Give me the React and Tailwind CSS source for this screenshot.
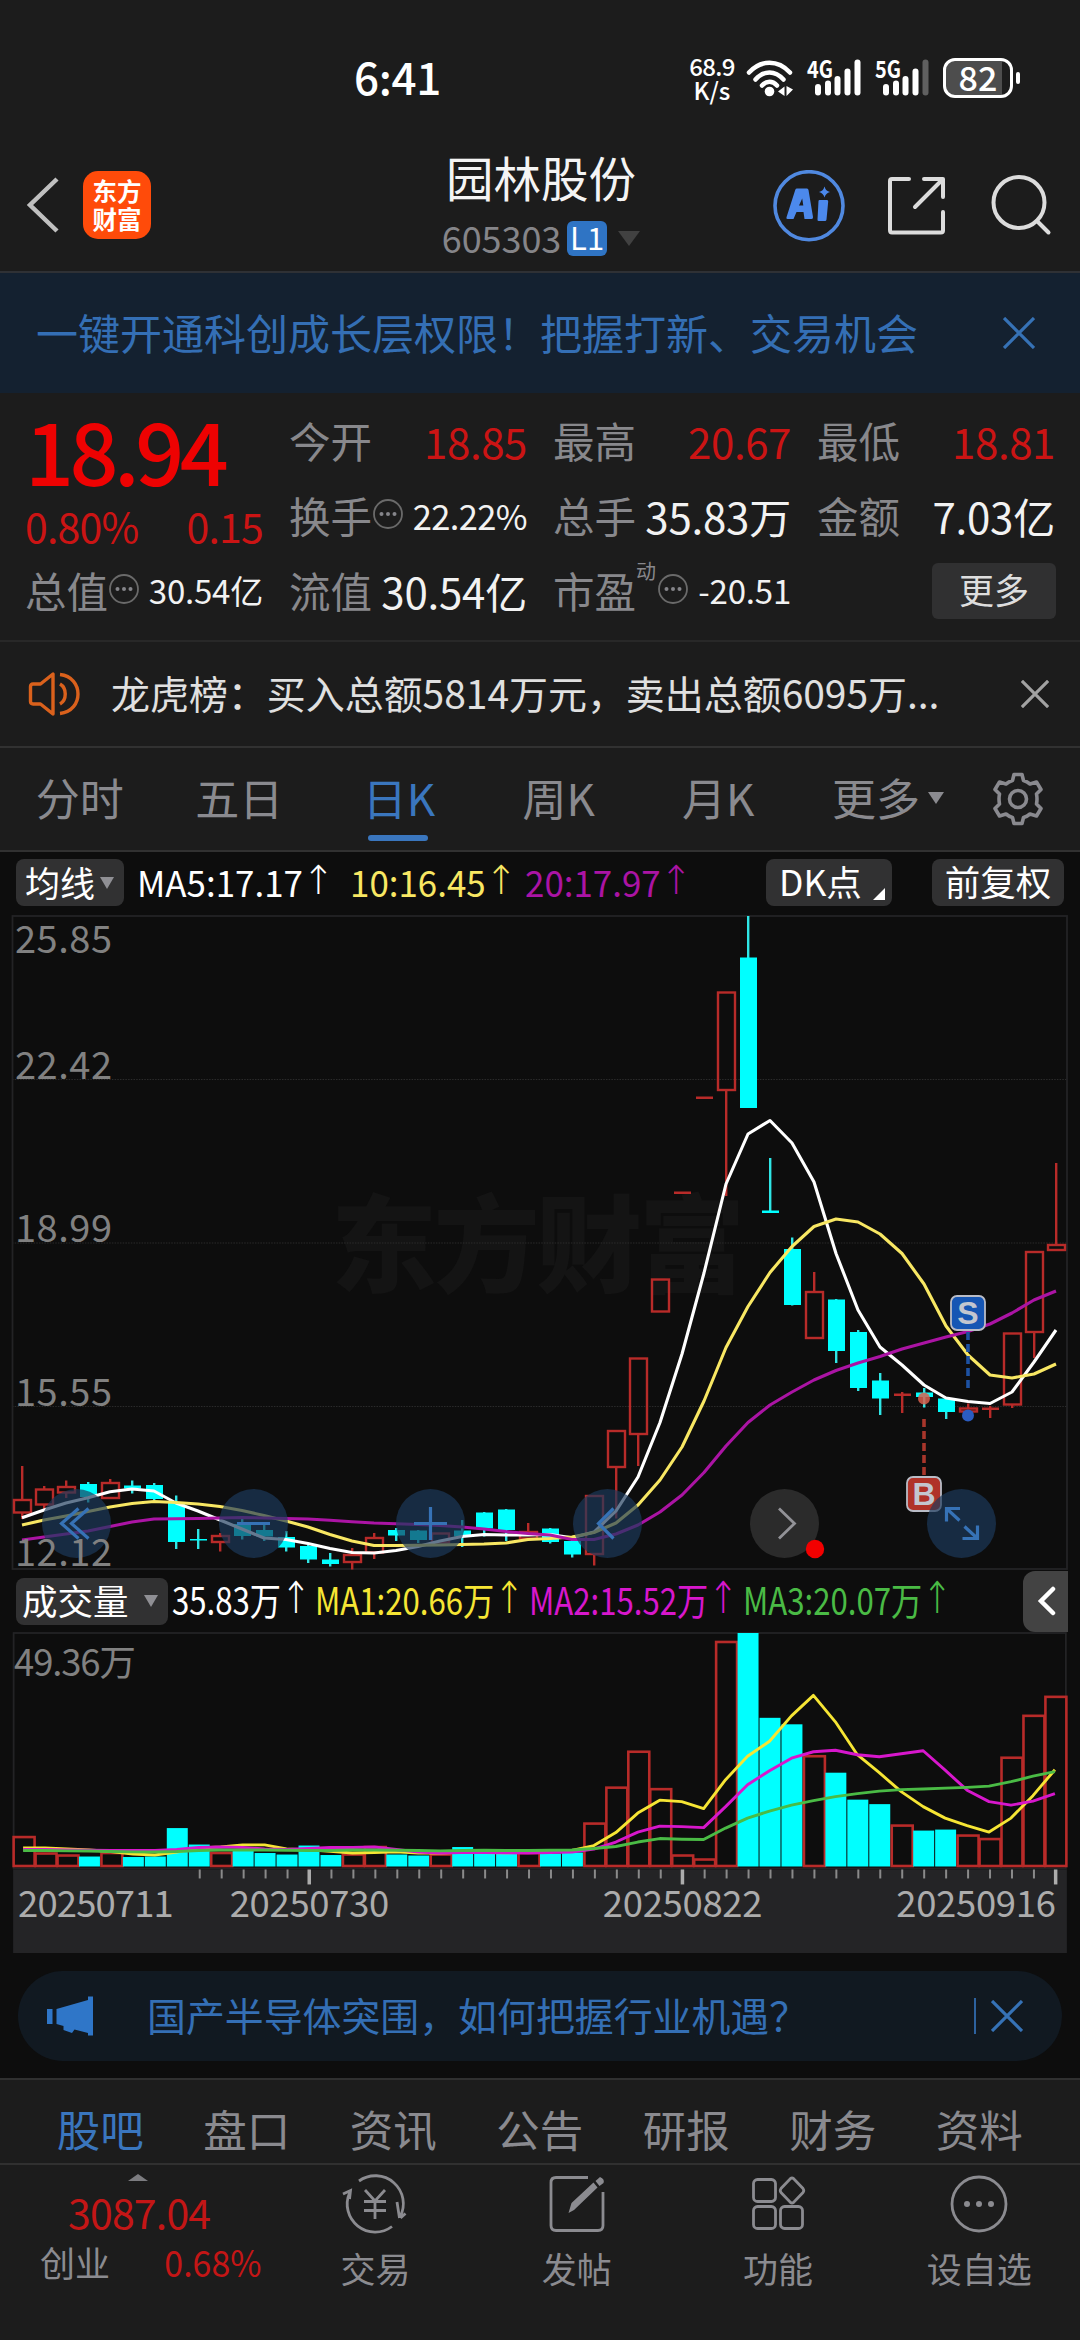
import React from "react";

// Daily candles: [kind, high, open/close top, open/close bottom, low] in screen units.
const CANDLES = [
  ["r", 1465, 1499, 1511.5, 1518], ["r", 1485, 1488.5, 1503.5, 1510], ["r", 1479.5, 1486, 1491.5, 1497],
  ["c", 1481, 1483, 1496, 1501.5], ["r", 1478, 1482, 1497, 1497], ["c", 1479.5, 1484.5, 1487.5, 1492.5],
  ["c", 1482, 1484, 1498, 1499], ["c", 1494.5, 1502, 1541, 1548], ["c", 1528, 1538, 1539.5, 1548],
  ["r", 1532, 1535, 1541, 1550.5], ["c", 1517, 1523, 1535, 1538.5], ["c", 1524, 1529, 1535.5, 1540],
  ["c", 1530, 1536, 1546.5, 1550.5], ["c", 1544, 1545, 1558.5, 1562], ["c", 1552, 1558.5, 1563, 1565.5],
  ["r", 1547, 1554, 1561, 1568.5], ["r", 1532, 1537, 1551.5, 1558], ["c", 1527, 1529, 1534.5, 1540],
  ["c", 1529, 1529.5, 1539, 1542], ["r", 1532, 1532.5, 1541.5, 1541.5], ["c", 1519, 1529.5, 1535.5, 1546],
  ["c", 1511, 1511.5, 1527.5, 1535.5], ["c", 1508, 1508.5, 1529, 1540], ["r", 1522, 1531, 1537.5, 1537.5],
  ["c", 1527, 1527.5, 1541, 1542.5], ["c", 1539, 1540, 1553.5, 1556.5], ["r", 1494, 1495, 1553, 1564.5],
  ["r", 1429, 1430, 1466, 1517.5], ["r", 1357, 1357.5, 1433, 1465], ["r", 1278, 1278.5, 1310.5, 1311],
  ["r", 1191.5, 1190.5, 1192.5, 1191.5], ["r", 1096.5, 1095.5, 1097.5, 1096.5], ["r", 991, 991.5, 1089, 1195],
  ["c", 915, 956.5, 1107, 1107], ["c", 1157, 1209.5, 1212, 1210.5], ["c", 1236.5, 1248, 1304, 1304.5],
  ["r", 1271, 1291, 1337, 1337], ["c", 1298, 1298.5, 1350, 1362], ["c", 1329, 1331, 1387, 1390],
  ["c", 1372, 1379.5, 1397.5, 1414], ["r", 1391, 1392.5, 1394.5, 1412], ["c", 1387, 1391.5, 1396, 1406.5],
  ["c", 1397, 1397.5, 1411, 1418], ["r", 1402.5, 1407.5, 1410.5, 1415], ["r", 1405, 1406.5, 1408.5, 1417],
  ["r", 1332, 1332.5, 1403.5, 1407], ["r", 1250, 1251, 1331, 1357], ["r", 1162, 1244, 1249, 1250],
];

const MA5 = [1516.7, 1509, 1502, 1496.7, 1490.7, 1488, 1490, 1502, 1510, 1519, 1528, 1537, 1538.5, 1542.5, 1547.5, 1551.5, 1552, 1549.5, 1545.5, 1540, 1535.5, 1533.5, 1534, 1534, 1533.5, 1536.7, 1531, 1510, 1476, 1421.5, 1353, 1272, 1183, 1133, 1119.5, 1142, 1181, 1252.5, 1309, 1346, 1364, 1384, 1397, 1400.5, 1402.5, 1391, 1361, 1329];
const MA10 = [1524, 1519, 1515, 1510.5, 1506, 1502.5, 1500.5, 1501.5, 1503, 1505.5, 1509.5, 1514.5, 1520, 1526, 1533.5, 1540, 1544.5, 1544.5, 1544.3, 1544, 1543.5, 1543, 1542, 1538.5, 1537.5, 1536, 1531.5, 1522, 1504, 1479, 1446, 1400, 1346.5, 1305.5, 1271.5, 1245.5, 1225.5, 1218, 1221, 1233, 1252.5, 1283, 1325, 1354, 1374, 1377, 1373, 1363];
const MA20 = [1539, 1536, 1533, 1530, 1525.5, 1521, 1518, 1517.7, 1517.5, 1517, 1516.5, 1517, 1517.5, 1518, 1519.3, 1520.7, 1522, 1522.7, 1523.5, 1524.5, 1526, 1528, 1530.5, 1532.5, 1534, 1538.5, 1538.5, 1533, 1524, 1511, 1494, 1471.5, 1445, 1421.5, 1404, 1391, 1379, 1369.5, 1362, 1355.5, 1348, 1342, 1336, 1330.5, 1323, 1312, 1299, 1290];

const VOL_TOP = [1836.5, 1853, 1855, 1856, 1852.5, 1856.5, 1856, 1827.5, 1844, 1852.5, 1850, 1852.5, 1854, 1845, 1854.5, 1854, 1846.5, 1854, 1855, 1854, 1846.5, 1850, 1852.5, 1852.5, 1853, 1852, 1823, 1787, 1751, 1788.5, 1855, 1859, 1641, 1632, 1717, 1723.5, 1755.5, 1772, 1799, 1803.5, 1825, 1830, 1829, 1835, 1838.5, 1757, 1715, 1696];
const VMA1 = [1847.5, 1847.5, 1848.3, 1849.3, 1851, 1853.5, 1854.5, 1851.5, 1847.5, 1846.3, 1844.3, 1844.3, 1848.3, 1849.3, 1850.7, 1852.5, 1852, 1851.3, 1852.5, 1852.5, 1851.7, 1852, 1852.3, 1851.5, 1850.5, 1850, 1845, 1832, 1812.5, 1799.5, 1801, 1808, 1779, 1755.5, 1740.5, 1715, 1694.5, 1721, 1754, 1772, 1791, 1806, 1817.5, 1825, 1831.5, 1817.5, 1795, 1769];
const VMA2 = [1849, 1849, 1849.3, 1849.7, 1850, 1850, 1850, 1849, 1847, 1846.5, 1847, 1848.5, 1849, 1848, 1847, 1847, 1846.5, 1849, 1851.5, 1852.5, 1852, 1852, 1852.3, 1852.5, 1852, 1851.5, 1848.5, 1841.5, 1831.5, 1825.5, 1826, 1827, 1806, 1784, 1770, 1757.5, 1751, 1749.5, 1754, 1756, 1753, 1750, 1769.5, 1789.5, 1801, 1804.5, 1800.5, 1793];
const VMA3 = [1850, 1850, 1850.3, 1850.5, 1851, 1851.3, 1851.5, 1851, 1850, 1849.5, 1849.5, 1849.5, 1849.7, 1850, 1850, 1849.5, 1849.5, 1849.7, 1850, 1850.3, 1850, 1849.7, 1850, 1850, 1849.7, 1849.5, 1848, 1846, 1841.5, 1838, 1838.7, 1839, 1827.5, 1817.5, 1810.5, 1804.5, 1800, 1796, 1793, 1790.5, 1789, 1788.3, 1787.5, 1786.7, 1785.5, 1781, 1775.5, 1771];

const RED = "#b82b29";
const CYAN = "#00ffff";
const cx = (i) => 22 + 22 * i;
const line = (ys) => ys.map((y, i) => `${cx(i)},${y}`).join(" ");

function Candle({ d, i }) {
  const [kind, hi, top, bottom, lo] = d;
  const x = cx(i);
  if (kind === "c") {
    return (
      <g fill={CYAN}>
        <rect x={x - 1} y={hi} width="2.4" height={lo - hi} fill="#2fe6e6" />
        <rect x={x - 8} y={top} width="17" height={bottom - top} />
      </g>
    );
  }
  if (bottom - top <= 2) {
    return (
      <g fill={RED}>
        <rect x={x - 1} y={hi} width="2.4" height={lo - hi} />
        <rect x={x - 8} y={top} width="17" height="2.5" />
      </g>
    );
  }
  return (
    <g fill={RED}>
      <rect x={x - 1} y={hi} width="2.4" height={Math.max(0, top - hi)} />
      <rect x={x - 1} y={bottom} width="2.4" height={Math.max(0, lo - bottom)} />
      <rect x={x - 8} y={top} width="17" height={bottom - top} fill="none" stroke={RED} strokeWidth="2.4" />
    </g>
  );
}

function FloatButton({ x, fill = "#1c3a5c", opacity = 0.68, children }) {
  return (
    <g transform={`translate(${x} 1522.5)`}>
      <circle r="34.5" fill={fill} fillOpacity={opacity} />
      <g fill="none" stroke="#3672b6" strokeWidth="3.2">{children}</g>
    </g>
  );
}

function Marker({ x, y, letter, fill }) {
  return (
    <g transform={`translate(${x} ${y})`}>
      <rect x="-17" y="-17" width="34" height="34" rx="6" fill={fill} stroke="#b9bcc6" strokeWidth="1.8" />
      <text x="0" y="11" textAnchor="middle" fontSize="32" fontWeight="700" fill="#c3c6cf" fontFamily="Liberation Sans, sans-serif">{letter}</text>
    </g>
  );
}

function PriceChart() {
  return (
    <svg className="block w-[1080px] h-[656px] overflow-visible" viewBox="0 914 1080 656">
      <text x="331" y="1283" fontSize="106" fontWeight="900" fill="#141414" textLength="414">东方财富</text>
      {[1078.5, 1242, 1405.5].map((y) => (
        <line key={y} x1="12" x2="1067" y1={y} y2={y} stroke="#2b2b2b" strokeWidth="1.2" strokeDasharray="1.5 1.2" />
      ))}
      <rect x="12.5" y="915" width="1054.5" height="653" fill="none" stroke="#232325" strokeWidth="1.8" />
      {CANDLES.map((d, i) => <Candle key={i} d={d} i={i} />)}
      <g fill="none" strokeWidth="3.1" strokeLinejoin="round">
        <polyline points={line(MA5)} stroke="#ffffff" />
        <polyline points={line(MA10)} stroke="#f8e763" />
        <polyline points={line(MA20)} stroke="#ab14a4" />
      </g>
      <line x1="968" x2="968" y1="1331" y2="1388" stroke="#1d52a3" strokeWidth="3.6" strokeDasharray="8 4" />
      <line x1="924" x2="924" y1="1418" y2="1475" stroke="#a8362b" strokeWidth="3.6" strokeDasharray="8 4" />
      <circle cx="924" cy="1397.5" r="6" fill="#d9604f" fillOpacity="0.85" />
      <circle cx="968" cy="1414.5" r="6" fill="#2b5cc0" />
      <Marker x={968} y={1312} letter="S" fill="#1656b4" />
      <Marker x={924} y={1493} letter="B" fill="#b03228" />
      <FloatButton x={76.5}><path d="M2-15L-15 0L2 15M12-15L-5 0L12 15" /></FloatButton>
      <FloatButton x={253.5}><path d="M-16.5 0H16.5" /></FloatButton>
      <FloatButton x={430.5}><path d="M-16.5 0H16.5M0-16.5V16.5" /></FloatButton>
      <FloatButton x={607.5}><path d="M6-15L-9 0L6 15" /></FloatButton>
      <FloatButton x={784.5} fill="#2c2c2c" opacity={0.97}><path d="M-5.500-15L10 0L-5.500 15" stroke="#929297" strokeWidth="2.8" /></FloatButton>
      <FloatButton x={961.5}><path d="M-15-2V-15H-1.500M-15-15L-2-3M16 2V15H1M16 15L3 3" /></FloatButton>
      <circle cx="815" cy="1548" r="9.200" fill="#f20000" />
      <g fontSize="38" fill="#818181">
        <text x="15" y="952" textLength="97">25.85</text>
        <text x="15" y="1078" textLength="97">22.42</text>
        <text x="15" y="1241" textLength="97">18.99</text>
        <text x="15" y="1405" textLength="97">15.55</text>
        <text x="15" y="1565" textLength="97">12.12</text>
      </g>
    </svg>
  );
}

function VolumeChart() {
  return (
    <svg className="block w-[1080px] h-[322px]" viewBox="0 1631 1080 322">
      <rect x="12.500" y="1632" width="1054.500" height="236" fill="none" stroke="#232325" strokeWidth="1.800" />
      <text x="13" y="1675" fontSize="36.500" fill="#818181" textLength="122">49.36万</text>
      {VOL_TOP.map((t, i) =>
        CANDLES[i][0] === "r" ? (
          <rect key={i} x={cx(i) - 9.5} y={t} width="21" height={1865.5 - t} fill="none" stroke={RED} strokeWidth="2.6" />
        ) : (
          <rect key={i} x={cx(i) - 10} y={t} width="21" height={1866 - t} fill={CYAN} />
        )
      )}
      <g fill="none" strokeWidth="2.900" strokeLinejoin="round">
        <polyline points={line(VMA1)} stroke="#f6e534" />
        <polyline points={line(VMA2)} stroke="#d717cc" />
        <polyline points={line(VMA3)} stroke="#4abb45" />
      </g>
      <rect x="12" y="1869" width="1056" height="84" fill="#242426" />
      {CANDLES.map((_, i) => {
        if (i < 8) return null;
        const major = i === 13 || i === 30 || i === 47;
        return <rect key={i} x={cx(i) + (major ? -1 : 0)} y="1869" width={major ? 3.5 : 2} height={major ? 15 : 9} fill={major ? "#acacac" : "#8a8a8a"} />;
      })}
      <g fontSize="36.500" fill="#acacac">
        <text x="17" y="1917" textLength="156">20250711</text>
        <text x="229" y="1917" textLength="160">20250730</text>
        <text x="603" y="1917" textLength="160">20250822</text>
        <text x="897" y="1917" textLength="160">20250916</text>
      </g>
    </svg>
  );
}

function Cross({ className, stroke, w = 3 }) {
  return (
    <svg className={className} viewBox="0 0 32 32" fill="none" stroke={stroke} strokeWidth={w}>
      <path d="M1 1L31 31M31 1L1 31" />
    </svg>
  );
}

function Dots() {
  return (
    <svg className="w-8 h-8 shrink-0" viewBox="0 0 32 32">
      <circle cx="16" cy="16" r="14" fill="none" stroke="#6a6a6a" strokeWidth="1.800" />
      <g fill="#85858a"><circle cx="9.500" cy="16" r="2" /><circle cx="16" cy="16" r="2" /><circle cx="22.500" cy="16" r="2" /></g>
    </svg>
  );
}

function Signal({ label, dim }) {
  const bars = [[8, 11.5], [18, 15], [27.5, 19.5], [37.5, 27], [47.5, 36]];
  return (
    <svg className="w-[56px] h-[40px] overflow-visible" viewBox="0 0 56 40">
      <text x="0" y="19.5" fontSize="23.5" fontWeight="700" fill="#fff" textLength="26" lengthAdjust="spacingAndGlyphs">{label}</text>
      {bars.map(([x, h], i) => (
        <rect key={i} x={x} y={37.5 - h} width="6" height={h} rx="3" fill={dim && i === 4 ? "#606060" : "#fff"} />
      ))}
    </svg>
  );
}

function StatusBar() {
  return (
    <div className="flex h-[158px] items-start text-white">
      <div className="ml-[354px] mt-[44px] w-[335px] text-[44px] leading-[64px] font-medium tracking-[-0.3px]">6:41</div>
      <div className="mt-[54px] w-[46px] text-center text-[24px] leading-[23.500px] font-medium">
        <div className="tracking-[-0.7px]">68.9</div>
        <div>K/s</div>
      </div>
      <svg className="ml-[10px] mt-[58px] w-[50px] h-[40px]" viewBox="0 0 50 40" fill="none" stroke="#fff" strokeWidth="4.500" strokeLinecap="round">
        <path d="M4 14.500C16 1.500 33 1.500 45 14.500M10.500 21.500C19 12 30 12 38.500 21.500M17 27.500C21.500 22.500 27.500 22.500 32 27.500" />
        <circle cx="24.500" cy="33.500" r="4.800" fill="#fff" stroke="none" />
        <path d="M39.500 28.500V38L33 33.500ZM41.500 28L48 31.500L41.500 38Z" fill="#fff" stroke="none" />
      </svg>
      <div className="ml-[12px] mt-[58px]"><Signal label="4G" /></div>
      <div className="ml-[12px] mt-[58px]"><Signal label="5G" dim /></div>
      <div className="ml-[12px] mt-[58px] flex h-[40px] items-center">
        <div className="flex h-[40px] w-[70px] items-center justify-center rounded-[12px] border-[3px] border-white bg-[linear-gradient(90deg,#4d4d4d_88%,#1c1c1c_88%)] pb-[3px] text-[34px] leading-[34px] font-medium">82</div>
        <div className="ml-[3px] h-3 w-1 rounded-full bg-white" />
      </div>
    </div>
  );
}

function Header() {
  return (
    <div className="flex h-[115px] border-b-2 border-[#2f3135]">
      <svg className="ml-[25px] mt-[18px] w-[36px] h-[58px]" viewBox="0 0 36 58" fill="none" stroke="#c0c0c0" strokeWidth="4.500"><path d="M32 3L5 29L32 55" /></svg>
      <div className="ml-[22px] mt-[13px] flex h-[68px] w-[68px] flex-col items-center justify-center rounded-[15px] bg-[#ff4b0a] text-[24.500px] leading-[28.500px] font-bold text-white">
        <div>东方</div>
        <div>财富</div>
      </div>
      <div className="ml-[235px] flex w-[310px] flex-col items-center">
        <div className="mt-[-13px] text-[47.500px] leading-[64px] text-[#f4f4f4]">园林股份</div>
        <div className="mt-[7px] flex h-[44px] items-center">
          <div className="mt-[-3px] text-[36px] leading-[44px] tracking-[-0.1px] text-[#858589]">605303</div>
          <div className="ml-[6px] flex h-[35px] w-10 items-center justify-center rounded-[6px] bg-[#2f74c4] pb-[3px] text-[31px] leading-[32px] text-white">L1</div>
          <div className="ml-[11px] h-0 w-0 border-x-[11px] border-t-[15px] border-x-transparent border-t-[#414141]" />
        </div>
      </div>
      <svg className="ml-[77px] mt-[12px] w-[72px] h-[72px]" viewBox="0 0 72 72">
        <circle cx="36" cy="35.700" r="34" fill="none" stroke="#5089e0" strokeWidth="3.600" />
        <path fillRule="evenodd" d="M24 18.500H34Q35.200 18.500 35.500 20L40 47Q40.300 49 38.500 49H31.500L30.500 42H23.500L20.500 49H14.500Q12.800 49 13.500 47.300L22.300 19.700Q22.800 18.500 24 18.500ZM29.200 28.500L26 35.500H30.300Z" fill="#4c89ec" />
        <path d="M46.500 30H54Q55.400 30 55.200 31.500L53.500 49.500Q53.300 51 52 51H45.800Q44.300 51 44.500 49.500L45.500 31Q45.600 30 46.500 30ZM51.500 16.500Q52.700 21 57 22Q52.700 23.200 51.500 27.500Q50.300 23.200 46 22Q50.300 21 51.500 16.500Z" fill="#4c89ec" />
      </svg>
      <svg className="ml-[42px] mt-[18px] w-[60px] h-[60px]" viewBox="0 0 60 60" fill="none" stroke="#dcdcdc" strokeWidth="4" strokeLinecap="round" strokeLinejoin="round">
        <path d="M22 3H5Q3 3 3 5V54Q3 56.500 5 56.500H54Q56 56.500 56 54.500V36M37 3H56V21M55 4L28 31" />
      </svg>
      <svg className="ml-[42px] mt-[16px] w-[64px] h-[64px]" viewBox="0 0 64 64" fill="none" stroke="#dcdcdc" strokeWidth="4" strokeLinecap="round">
        <circle cx="30" cy="28.500" r="25.500" /><path d="M48 47L59.500 58.500" />
      </svg>
    </div>
  );
}

function Quote({ label, sup, dots, value, className }) {
  return (
    <div className="flex h-[75px] w-[238px] items-center justify-between">
      <div className="flex items-center text-[41.500px] leading-[75px] text-[#88888c]">
        {label}
        {sup && <span className="mt-[-40px] text-[20px] leading-[24px]">{sup}</span>}
        {dots && <span className={sup ? "mt-[-3px] ml-[1px]" : "mt-[-3px]"}><Dots /></span>}
      </div>
      <div className={className}>{value}</div>
    </div>
  );
}

function Quotes() {
  const red = "text-[42px] leading-[75px] text-[#cb1414] tracking-[-0.4px]";
  const big = "text-[42px] leading-[75px] text-[#f2f2f2] tracking-[-0.2px]";
  const small = "text-[33px] leading-[75px] text-[#f2f2f2] tracking-[-0.2px]";
  return (
    <div className="flex h-[249px] gap-[26px] border-b-2 border-[#282828] pl-[25px] pt-[10px]">
      <div className="flex w-[238px] flex-col">
        <div className="h-[93px] text-[86px] leading-[92px] font-medium tracking-[-4.500px] text-[#ee0202]">18.94</div>
        <div className="flex h-[57px] items-center justify-between text-[41px] leading-[62px] tracking-[-0.8px] text-[#cb1414]">
          <div>0.80%</div><div>0.15</div>
        </div>
        <Quote label="总值" dots value="30.54亿" className={small} />
      </div>
      <div className="flex flex-col">
        <Quote label="今开" value="18.85" className={red} />
        <Quote label="换手" dots value="22.22%" className="text-[34.500px] leading-[75px] text-[#f2f2f2] tracking-[-0.6px]" />
        <Quote label="流值" value="30.54亿" className={big} />
      </div>
      <div className="flex flex-col">
        <Quote label="最高" value="20.67" className={red} />
        <Quote label="总手" value="35.83万" className={big} />
        <Quote label="市盈" sup="动" dots value="-20.51" className={small} />
      </div>
      <div className="flex flex-col">
        <Quote label="最低" value="18.81" className={red} />
        <Quote label="金额" value="7.03亿" className={big} />
        <div className="mt-[10px] ml-[115px] flex h-[56px] w-[124px] items-center justify-center rounded-[6px] bg-[#303031] pb-[4px] text-[35px] leading-[50px] text-[#dedede]">更多</div>
      </div>
    </div>
  );
}

function News() {
  return (
    <div className="flex h-[106px] items-center border-b-2 border-[#313131]">
      <svg className="ml-[28px] w-[54px] h-[46px]" viewBox="0 0 54 46" fill="none" stroke="#da611c" strokeWidth="3.400" strokeLinejoin="round">
        <path d="M25 3V43L12.500 33H5Q2.500 33 2.500 30.500V15.500Q2.500 13 5 13H12.500Z" />
        <path d="M32 13C39 17 39 29 32 33M32 3.500C56 6 56 40 32 42.500" />
      </svg>
      <div className="ml-[29px] mb-[5px] w-[897px] text-[39px] leading-[60px] tracking-[-0.05px] text-[#e0e0e0]">龙虎榜：买入总额5814万元，卖出总额6095万...</div>
      <Cross className="ml-[13px] w-7 h-7" stroke="#a2a2a2" w={3.6} />
    </div>
  );
}

function PeriodTabs() {
  return (
    <div className="flex h-[104px] border-b-2 border-[#313131] text-[44px] leading-[98px] text-[#8a8a8f]">
      {["分时", "五日", "日K", "周K", "月K"].map((t) => (
        <div key={t} className={t === "日K" ? "relative w-[160px] text-center text-[#3a76be]" : "w-[159.500px] text-center"}>
          {t}
          {t === "日K" && <div className="absolute bottom-[9px] left-[49px] h-[6px] w-[60px] rounded-full bg-[#3a76be]" />}
        </div>
      ))}
      <div className="ml-[34px] flex h-[98px] items-center">
        更多
        <div className="ml-[8px] mt-[1px] h-0 w-0 border-x-[8px] border-t-[12px] border-x-transparent border-t-[#8a8a8f]" />
      </div>
      <svg className="ml-[47px] mt-[24px] w-[54px] h-[54px]" viewBox="0 0 54 54" fill="none" stroke="#8a8a8f" strokeWidth="3.600" strokeLinejoin="round">
        <path d="M23 2.500H31L32.500 8.500Q36 9.500 39 12L45.500 10L50 17.500L45.500 22Q46.500 27 45.500 32L50 36.500L45.500 44L39 42Q36 44.500 32.500 45.500L31 51.500H23L21.500 45.500Q18 44.500 15 42L8.500 44L4 36.500L8.500 32Q7.500 27 8.500 22L4 17.500L8.500 10L15 12Q18 9.500 21.500 8.500Z" />
        <circle cx="27" cy="27" r="8.500" />
      </svg>
    </div>
  );
}

// An indicator reading squeezed horizontally so that it fits its slot.
function Reading({ text, box, color, inner, arrow }) {
  return (
    <div className={box}>
      <div className={inner} style={{ color }}>
        <span>{text}</span>
        <span className={arrow}>↑</span>
      </div>
    </div>
  );
}

function AverageRow() {
  const inner = "flex h-[44px] origin-left scale-x-[0.97] whitespace-nowrap text-[36px] leading-[44px]";
  const arrow = "ml-[-1px] font-['DejaVu_Sans'] font-extralight text-[40px] leading-[42px]";
  return (
    <div className="flex h-[63px] pt-[7px] text-white">
      <div className="ml-[16px] flex h-[47px] w-[108px] items-center rounded-[8px] bg-[#313132] pl-[9px] text-[35px] leading-[45px]">
        <span className="mt-[-3px]">均线</span>
        <div className="ml-[5px] h-0 w-0 border-x-[7.500px] border-t-[12px] border-x-transparent border-t-[#8f8f94]" />
      </div>
      <Reading text="MA5:17.17" box="ml-[13px] w-[213px]" inner={inner} arrow={arrow} color="#fff" />
      <Reading text="10:16.45" box="w-[175px]" inner={inner} arrow={arrow} color="#f8e763" />
      <Reading text="20:17.97" box="w-[241px]" inner={inner} arrow={arrow} color="#ab14a4" />
      <div className="relative flex h-[47px] w-[126px] items-center rounded-[8px] bg-[#313132] pb-[3px] pl-[13px] text-[35.500px] leading-[44px]">
        DK点
        <div className="absolute right-[7px] bottom-[6px] h-0 w-0 border-b-[12px] border-l-[12px] border-b-white border-l-transparent" />
      </div>
      <div className="ml-[40px] flex h-[47px] w-[132px] items-center justify-center rounded-[8px] bg-[#313132] pb-[3px] text-[35.500px] leading-[44px]">前复权</div>
    </div>
  );
}

function VolumeRow() {
  const inner = "flex h-[54px] origin-left scale-x-[0.82] whitespace-nowrap text-[38px] leading-[52px]";
  const arrow = "font-['DejaVu_Sans'] font-extralight text-[44px] leading-[50px]";
  return (
    <div className="flex h-[61px] text-white">
      <div className="ml-[16px] mt-[7px] flex h-[47px] w-[152px] items-center rounded-[8px] bg-[#313132] pl-[6px] text-[35.500px] leading-[45px]">
        <span className="mt-[-3px]">成交量</span>
        <div className="ml-[15px] h-0 w-0 border-x-[7.500px] border-t-[12px] border-x-transparent border-t-[#8f8f94]" />
      </div>
      <Reading text="35.83万" box="ml-[4px] mt-[2px] w-[143px]" inner={inner} arrow={arrow} color="#fff" />
      <Reading text="MA1:20.66万" box="mt-[2px] w-[214px]" inner={inner} arrow={arrow} color="#f6e534" />
      <Reading text="MA2:15.52万" box="mt-[2px] w-[214px]" inner={inner} arrow={arrow} color="#d717cc" />
      <Reading text="MA3:20.07万" box="mt-[2px] w-[280px]" inner={inner} arrow={arrow} color="#4abb45" />
      <div className="flex h-[61px] w-[45px] items-center justify-center rounded-l-[12px] bg-[#434343]">
        <svg className="ml-[3px] w-5 h-[30px]" viewBox="0 0 20 30" fill="none" stroke="#fff" strokeWidth="4.500" strokeLinecap="round"><path d="M16 3L4 15L16 27" /></svg>
      </div>
    </div>
  );
}

function Promo() {
  return (
    <div className="mt-[18px] mb-[17px] ml-[18px] flex h-[90px] w-[1044px] items-center rounded-full bg-[#111921] text-[#346fb5]">
      <svg className="ml-[29px] w-[46px] h-10" viewBox="0 0 46 40" fill="#2f76c8">
        <path d="M0 13H5.500V28H0ZM9.500 13L41 4V0.500H46V39.500H41V37L27.500 33.500L25 37L16.500 34L16.500 30L9.500 28Z" />
      </svg>
      <div className="ml-[54px] mb-[5px] w-[827px] text-[38.900px] leading-[60px]">国产半导体突围，如何把握行业机遇？</div>
      <div className="h-9 w-[1.500px] bg-[#2d629f]" />
      <Cross className="ml-[15px] w-8 h-8" stroke="#3672b6" w={3.2} />
    </div>
  );
}

function SectionTabs() {
  return (
    <div className="flex h-[87px] border-y-2 border-[#303030] px-[27px] text-[43.500px] leading-[98px] text-[#8a8a8f]">
      {["股吧", "盘口", "资讯", "公告", "研报", "财务", "资料"].map((t, i) => (
        <div key={t} className={i === 0 ? "h-[83px] w-[146.500px] text-center text-[#3a76be]" : "h-[83px] w-[146.500px] text-center"}>{t}</div>
      ))}
    </div>
  );
}

function BottomItem({ label, children }) {
  return (
    <div className="flex w-[201.500px] flex-col items-center">
      <svg className="mt-[8px] w-[66px] h-[62px] shrink-0" viewBox="-33 -31 66 62" fill="none" stroke="#8b8b90" strokeWidth="2.800">{children}</svg>
      <div className="mt-[8px] text-[35px] leading-[50px] text-[#8b8b90]">{label}</div>
    </div>
  );
}

function BottomBar() {
  return (
    <div className="flex h-[175px]">
      <div className="flex w-[275px] flex-col">
        <div className="ml-[128px] mt-[9px] h-0 w-0 border-x-[10.500px] border-b-[7px] border-x-transparent border-b-[#7c7c80]" />
        <div className="ml-[68px] mt-[3px] text-[41px] leading-[54px] tracking-[-0.8px] text-[#c41616]">3087.04</div>
        <div className="ml-[40px] mt-[2px] flex w-[222px] justify-between text-[35px] leading-[44px] text-[#8b8b90]">
          <div>创业</div>
          <div className="origin-right scale-x-[0.93] text-[36.500px] text-[#c41616]">0.68%</div>
        </div>
      </div>
      <BottomItem label="交易">
        <path d="M-16-23A28 28 0 0 1 25 13M25.500 14L30.500 9.500M24.500 14L22-2M17 22.500A28 28 0 0 1-25.500-11M-32-10L-24.500-13.500L-25.500-5M-10-14L0-3L10-14M0-3V15M-11-2.500H11M-11 6.500H11" />
      </BottomItem>
      <BottomItem label="发帖">
        <path d="M11-26.500H-21Q-26-26.500-26-21.500V21.500Q-26 26.500-21 26.500H21Q26 26.500 26 21.500V-12" />
        <path d="M-8.500 9L-5.500-1L16.500-21.500L20.500-16.500L-3 6ZM18.500-23L23-27Q28-25 26.500-21L22.500-18Z" fill="#8b8b90" stroke="none" />
      </BottomItem>
      <BottomItem label="功能">
        <rect x="-24.500" y="-24.500" width="22" height="22" rx="4" /><rect x="-24.500" y="2.500" width="22" height="22" rx="4" /><rect x="2.500" y="2.500" width="22" height="22" rx="4" />
        <path d="M12.500-25.500Q14-26.500 15.500-25.500L25-15.500Q26.500-13.500 25-11.500L15.500-1.500Q14-0.500 12.500-1.500L3-11.500Q1.500-13.500 3-15.500Z" />
      </BottomItem>
      <BottomItem label="设自选">
        <circle r="27" />
        <g fill="#8b8b90" stroke="none"><circle cx="-12" cy="0" r="3" /><circle cx="0" cy="0" r="3" /><circle cx="12" cy="0" r="3" /></g>
      </BottomItem>
    </div>
  );
}

export default function App() {
  return (
    <div className="h-[2340px] w-[1080px] overflow-hidden bg-[#1c1c1c] font-['Noto_Sans_CJK_SC',sans-serif] font-normal">
      <StatusBar />
      <Header />
      <div className="flex h-[120px] items-center bg-[#142130] text-[#346fb5]">
        <div className="ml-[36px] mb-[3px] w-[967px] text-[42px] leading-[60px]">一键开通科创成长层权限！把握打新、交易机会</div>
        <Cross className="w-8 h-8" stroke="#3672b6" w={3.2} />
      </div>
      <Quotes />
      <News />
      <PeriodTabs />
      <div className="flex h-[1226px] flex-col bg-[#0d0d0d]">
        <AverageRow />
        <PriceChart />
        <VolumeRow />
        <VolumeChart />
        <Promo />
      </div>
      <SectionTabs />
      <BottomBar />
    </div>
  );
}
